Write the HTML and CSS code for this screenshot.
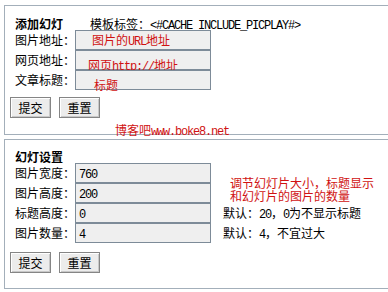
FILE: index.html
```html
<!DOCTYPE html>
<html lang="zh-CN">
<head>
    <meta charset="UTF-8">
    <title>幻灯设置</title>
    <link rel="stylesheet" href="styles.css">
</head>
<body>
    <div class="panel panel-add">
        <div class="head">
            <b class="title">添加幻灯</b>
            <span class="tag">模板标签：<span class="en">&lt;#CACHE_INCLUDE_PICPLAY#&gt;</span></span>
        </div>
        <div class="row">
            <span class="label">图片地址：</span>
            <div class="field"><span class="note note-url">图片的<span class="en">URL</span>地址</span></div>
        </div>
        <div class="row">
            <span class="label">网页地址：</span>
            <div class="field"><span class="note note-link">网页<span class="en">http://</span>地址</span></div>
        </div>
        <div class="row">
            <span class="label">文章标题：</span>
            <div class="field"><span class="note note-title">标题</span></div>
        </div>
        <div class="buttons">
            <button class="btn">提交</button>
            <button class="btn">重置</button>
        </div>
        <div class="sign">博客吧<span class="en">www.boke8.net</span></div>
    </div>

    <div class="panel panel-set">
        <div class="head">
            <b class="title">幻灯设置</b>
        </div>
        <div class="row">
            <span class="label">图片宽度：</span>
            <div class="field"><span class="en">760</span></div>
        </div>
        <div class="row">
            <span class="label">图片高度：</span>
            <div class="field"><span class="en">200</span></div>
        </div>
        <div class="row">
            <span class="label">标题高度：</span>
            <div class="field"><span class="en">0</span></div>
            <span class="hint">默认：<span class="en">20</span>，<span class="en">0</span>为不显示标题</span>
        </div>
        <div class="row">
            <span class="label">图片数量：</span>
            <div class="field"><span class="en">4</span></div>
            <span class="hint">默认：<span class="en">4</span>，不宜过大</span>
        </div>
        <div class="buttons">
            <button class="btn">提交</button>
            <button class="btn">重置</button>
        </div>
        <div class="memo">
            <div class="memo-line">调节幻灯片大小，标题显示</div>
            <div class="memo-line">和幻灯片的图片的数量</div>
        </div>
    </div>
</body>
</html>
```

FILE: styles.css
```css
* {
    margin: 0;
    padding: 0;
    box-sizing: border-box;
}

body {
    font-family: "Noto Sans CJK SC", sans-serif;
    font-size: 12px;
    color: #000;
    background: #fff;
    overflow: hidden;
}

.en {
    font-family: "Liberation Mono", monospace;
    font-size: 12px;
    letter-spacing: -1.2px;
}

.panel {
    position: relative;
    margin-left: 4px;
    margin-right: -10px;
    border: 1px solid #a3afba;
    padding-left: 10px;
}

.panel-add {
    margin-top: 5px;
    height: 130px;
    padding-top: 11px;
}

.panel-set {
    margin-top: 4px;
    height: 150px;
    padding-top: 10px;
}

.head {
    display: flex;
    height: 13px;
    line-height: 13px;
}

.title {
    width: 60px;
    font-weight: bold;
}

.tag {
    padding-left: 15px;
}

.row {
    display: flex;
    height: 20px;
}

.label {
    width: 60px;
    line-height: 20px;
}

.field {
    position: relative;
    width: 136px;
    height: 20px;
    border: 1px solid #7d8b98;
    background: #efefef;
    line-height: 18px;
    padding-left: 3px;
}

.note {
    position: absolute;
    color: #d01212;
    line-height: 12px;
    white-space: nowrap;
}

.note-url {
    left: 16px;
    top: 3px;
}

.note-link {
    left: 12px;
    top: 8px;
}

.note-title {
    left: 18px;
    top: 8px;
}

.hint {
    padding-left: 12px;
    line-height: 20px;
    white-space: nowrap;
}

.buttons {
    display: flex;
    gap: 8px;
    margin-left: -5px;
}

.panel-add .buttons {
    margin-top: 7px;
}

.panel-set .buttons {
    margin-top: 9px;
}

.btn {
    width: 41px;
    height: 21px;
    font-family: "Noto Sans CJK SC", sans-serif;
    font-size: 12px;
    color: #000;
    background: #ececec;
    border: 1px solid #858585;
    box-shadow: inset 1px 1px #fff, inset -1px -1px #c8c8c8;
}

.sign {
    margin-top: 6px;
    margin-left: 100px;
    line-height: 12px;
    color: #d01212;
}

.memo {
    position: absolute;
    left: 225px;
    top: 36px;
    color: #d01212;
}

.memo-line {
    height: 13px;
    line-height: 13px;
}
```
